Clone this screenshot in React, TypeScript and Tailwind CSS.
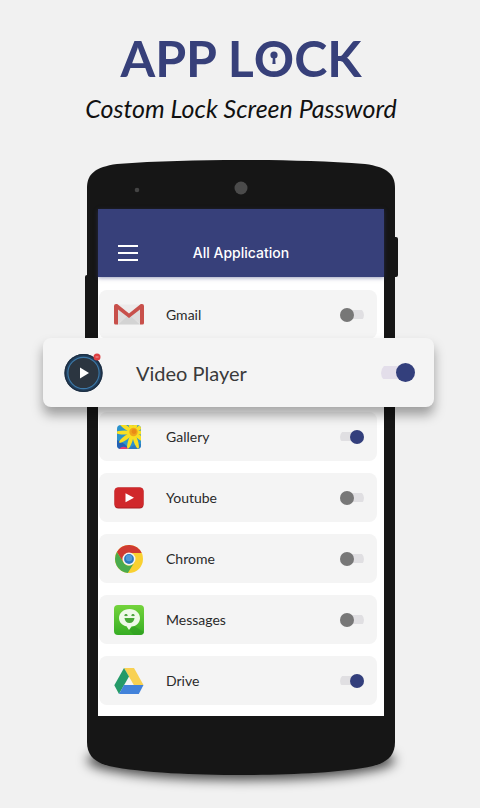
import { useState, type ComponentType } from "react";

function GmailIcon() {
  return (
    <svg viewBox="0 0 30 21" className="h-[21px] w-[30px]" aria-hidden="true">
      <rect x="1" y="0.5" width="28" height="20" rx="1.5" fill="#ecebeb" />
      <path d="M4 20.5 L15 10 L26 20.5Z" fill="#d3d3d3" />
      <path d="M4 4.5 L15 13.5 L26 4.5 V20 L15 10.5 L4 20Z" fill="#dedddd" />
      <path
        d="M0 2 Q0 0 2 0 H3.2 L15 9.4 L26.8 0 H28 Q30 0 30 2 V19 Q30 20.5 28.5 20.5 H26 V5.5 L15 14 L4 5.5 V20.5 H1.5 Q0 20.5 0 19Z"
        fill="#c8504b"
      />
    </svg>
  );
}

function VideoIcon() {
  return (
    <svg viewBox="0 0 40 40" className="size-10" aria-hidden="true">
      <circle cx="19.5" cy="20" r="19" fill="#22405e" />
      <circle cx="19.5" cy="20" r="18.4" fill="none" stroke="#1d2e42" strokeWidth="1.4" />
      <circle cx="19.5" cy="20" r="15.6" fill="#2b3540" stroke="#3d79a8" strokeWidth="1.1" />
      <path d="M16 14.6 L25 20 L16 25.4Z" fill="#fff" />
      <circle cx="33" cy="4" r="3.5" fill="#dd4043" />
      <path d="M31.5 4 H34.5" stroke="#f0a0a0" strokeWidth="1" />
    </svg>
  );
}

function GalleryIcon() {
  const petals = [18, 54, 90, 126, 162, 198, 234, 270, 306, 342];
  return (
    <svg viewBox="0 0 24 24" className="size-6" aria-hidden="true">
      <defs>
        <clipPath id="galleryTile">
          <rect width="24" height="24" rx="4" />
        </clipPath>
      </defs>
      <g clipPath="url(#galleryTile)">
        <rect width="24" height="24" fill="#2c93cc" />
        <path d="M0 15 Q8 18 12 24 H0Z" fill="#2360b4" />
        <path d="M2 24 Q6 19.5 12 24Z" fill="#e23c74" />
        <path d="M11 24 Q17 19 24 19 V24Z" fill="#2e79c0" />
        {petals.map((angle) => (
          <ellipse
            key={angle}
            cx="16"
            cy="-1"
            rx="2.1"
            ry="8.6"
            fill={angle % 4 === 2 ? "#f9df22" : "#f3cb17"}
            transform={`rotate(${angle} 16 7.5)`}
          />
        ))}
        <circle cx="16.5" cy="7" r="4.2" fill="#f0a41c" />
        <circle cx="17" cy="6.5" r="2.4" fill="#e98b17" />
      </g>
    </svg>
  );
}

function YoutubeIcon() {
  return (
    <svg viewBox="0 0 30 22" className="h-[22px] w-[30px]" aria-hidden="true">
      <rect x="0.5" y="0.5" width="29" height="21" rx="4" fill="#a91f22" />
      <rect x="0.5" y="0.5" width="29" height="20" rx="4" fill="#d0282b" />
      <path d="M11.5 6.2 L20 10.7 L11.5 15.2Z" fill="#fff" />
    </svg>
  );
}

function ChromeIcon() {
  return (
    <svg viewBox="0 0 30 30" className="size-[30px]" aria-hidden="true">
      <circle cx="15" cy="15" r="14" fill="#f9d030" />
      <path d="M2.9 8 A14 14 0 0 1 27.7 9 H15 A6.5 6.5 0 0 0 9.2 18.2Z" fill="#cf3a32" />
      <path d="M2.9 8 A14 14 0 0 0 13.8 28.95 L20.5 18.3 A6.5 6.5 0 0 1 9.3 18.3Z" fill="#4aab4d" />
      <circle cx="15" cy="15" r="6.5" fill="#f3f3f3" />
      <circle cx="15" cy="15" r="4.9" fill="#2b78bd" />
      <circle cx="15" cy="14" r="3.2" fill="#5199d6" />
    </svg>
  );
}

function MessagesIcon() {
  return (
    <svg viewBox="0 0 30 30" className="size-[30px]" aria-hidden="true">
      <defs>
        <linearGradient id="messagesTile" x1="0" y1="0" x2="0" y2="1">
          <stop offset="0" stopColor="#74d43c" />
          <stop offset="1" stopColor="#36ad24" />
        </linearGradient>
      </defs>
      <rect width="30" height="30" rx="4" fill="url(#messagesTile)" />
      <path d="M20 21 L30 27 V26 Q30 30 26 30 H20 L15 25Z" fill="#2f9c20" opacity="0.6" />
      <path
        d="M15.5 4 C21.5 4 26 8 26 13 C26 18 21.5 21.5 17.5 21.5 L15 25 L12.5 21.3 C8.5 20.5 5 17.5 5 13 C5 8 9.5 4 15.5 4Z"
        fill="#eef9e8"
      />
      <path d="M10.8 10.8 Q12 8.6 13.2 10.8 M17.8 10.8 Q19 8.6 20.2 10.8" fill="none" stroke="#3f9d30" strokeWidth="1.5" />
      <path d="M10.5 13 H20.5 Q19.8 18 15.5 18 Q11.2 18 10.5 13Z" fill="#47a836" />
    </svg>
  );
}

function DriveIcon() {
  return (
    <svg viewBox="0 0 30 26" className="h-[26px] w-[30px]" aria-hidden="true">
      <path d="M10 0 H20 L29.5 17 H19.8Z" fill="#f8d152" />
      <path d="M10 0 L15 8.5 L5 26 L0.3 17.3Z" fill="#249a68" />
      <path d="M10 17 H29.5 L24.8 26 H5Z" fill="#4282da" />
    </svg>
  );
}

type AppEntry = {
  name: string;
  Icon: ComponentType;
  locked: boolean;
  featured?: boolean;
};

const apps: AppEntry[] = [
  { name: "Gmail", Icon: GmailIcon, locked: false },
  { name: "Video Player", Icon: VideoIcon, locked: true, featured: true },
  { name: "Gallery", Icon: GalleryIcon, locked: true },
  { name: "Youtube", Icon: YoutubeIcon, locked: false },
  { name: "Chrome", Icon: ChromeIcon, locked: false },
  { name: "Messages", Icon: MessagesIcon, locked: false },
  { name: "Drive", Icon: DriveIcon, locked: true },
];

function AppRow({ name, Icon, locked, featured }: AppEntry) {
  const [on, setOn] = useState(locked);
  const id = `lock-${name.replace(" ", "-").toLowerCase()}`;
  const row = featured
    ? "relative z-10 -mt-[13px] -mb-[7px] -mr-[57px] -ml-[56px] flex h-[69px] items-center rounded-lg bg-[#f4f4f4] pr-[19px] pl-[21px] shadow-[0_8px_12px_rgba(0,0,0,0.35)]"
    : "flex h-[49px] items-center rounded-lg bg-[#f4f4f4] pr-[13px] pl-[15px]";
  const iconBox = featured
    ? "flex w-10 shrink-0 justify-center"
    : "flex w-[30px] shrink-0 justify-center";
  const label = featured
    ? "ml-8 flex-1 text-[20px] leading-6 text-[#3a3a3a]"
    : "ml-[22px] flex-1 text-[14px] leading-5 text-[#2a2a2a]";
  const toggle = featured
    ? "flex h-5 w-[34px] cursor-pointer appearance-none items-center rounded-full bg-[linear-gradient(#e3deea,#e3deea)] bg-[length:34px_13px] bg-center bg-no-repeat before:block before:size-[19px] before:rounded-full before:bg-[#777] checked:justify-end checked:before:bg-[#333f7c]"
    : "flex h-[14px] w-6 cursor-pointer appearance-none items-center rounded-full bg-[linear-gradient(#e0dfe2,#e0dfe2)] bg-[length:24px_9px] bg-center bg-no-repeat before:block before:size-[14px] before:rounded-full before:bg-[#777] checked:justify-end checked:before:bg-[#333f7c]";
  return (
    <li className={row}>
      <span className={iconBox}>
        <Icon />
      </span>
      <label htmlFor={id} className={label}>
        {name}
      </label>
      <input id={id} type="checkbox" checked={on} onChange={() => setOn(!on)} className={toggle} />
    </li>
  );
}

export default function App() {
  return (
    <main className="min-h-screen overflow-x-hidden bg-[#f1f1f1] pt-[28px] pb-8 pl-[2px] font-['Lato','Liberation_Sans',sans-serif]">
      <header className="text-center">
        <h1 className="text-[50px] leading-[60px] font-bold text-[#37407a]">
          APP L
          <span className="relative inline-block">
            O
            <svg
              viewBox="0 0 8 14"
              className="absolute top-1/2 left-1/2 h-[14px] w-2 -translate-x-1/2 -translate-y-1/2"
              aria-hidden="true"
            >
              <circle cx="4" cy="4" r="3.6" fill="#37407a" />
              <path d="M3 5 H5 L5.6 13 H2.4Z" fill="#37407a" />
            </svg>
          </span>
          CK
        </h1>
        <p className="mt-1 text-[25px] leading-8 text-[#111] italic">Costom Lock Screen Password</p>
      </header>

      <div className="relative mx-auto mt-9 w-[calc(100%-170px)] max-w-[308px]">
        <span className="absolute -bottom-1 left-0 h-10 w-full rounded-[50%] bg-black/70 blur-[6px]" />
        <span className="absolute top-[115px] -left-[2px] h-32 w-2 rounded-l-xs bg-[#161616]" />
        <span className="absolute top-[77px] -right-[3px] h-10 w-2 rounded-r-xs bg-[#161616]" />

        <svg viewBox="0 0 308 49" preserveAspectRatio="none" className="relative block h-[49px] w-full" aria-hidden="true">
          <path
            d="M0 49 V28 C0 14 8 7 30 4 C70 1 110 0 154 0 C198 0 238 1 278 4 C300 7 308 14 308 28 V49Z"
            fill="#161616"
          />
          <circle cx="154" cy="28" r="6.5" fill="#4b4b4b" />
          <circle cx="50" cy="30" r="2.3" fill="#444" />
        </svg>

        <div className="relative bg-[#161616] px-[11px]">
          <div className="bg-white">
            <div className="grid h-[68px] grid-cols-[1fr_auto_1fr] items-center bg-[#37407a] px-5 pt-5 shadow-[0_1px_4px_rgba(55,64,122,0.5)]">
              <button type="button" aria-label="Menu" className="flex w-5 cursor-pointer flex-col gap-[5px]">
                <span className="h-[2px] w-full bg-white" />
                <span className="h-[2px] w-full bg-white" />
                <span className="h-[2px] w-full bg-white" />
              </button>
              <h2 className="font-['Inter','Liberation_Sans',sans-serif] text-[14px] leading-5 font-medium text-white">
                All Application
              </h2>
            </div>
            <ul className="flex flex-col gap-3 pt-[13px] pr-[7px] pb-[11px] pl-[1px]">
              {apps.map((app) => (
                <AppRow key={app.name} {...app} />
              ))}
            </ul>
          </div>
        </div>

        <svg viewBox="0 0 308 60" preserveAspectRatio="none" className="relative block h-[60px] w-full" aria-hidden="true">
          <path
            d="M0 0 V26 C0 40 8 46 22 50 C55 57 110 59 154 59 C198 59 253 57 286 50 C300 46 308 40 308 26 V0Z"
            fill="#161616"
          />
        </svg>
      </div>
    </main>
  );
}
